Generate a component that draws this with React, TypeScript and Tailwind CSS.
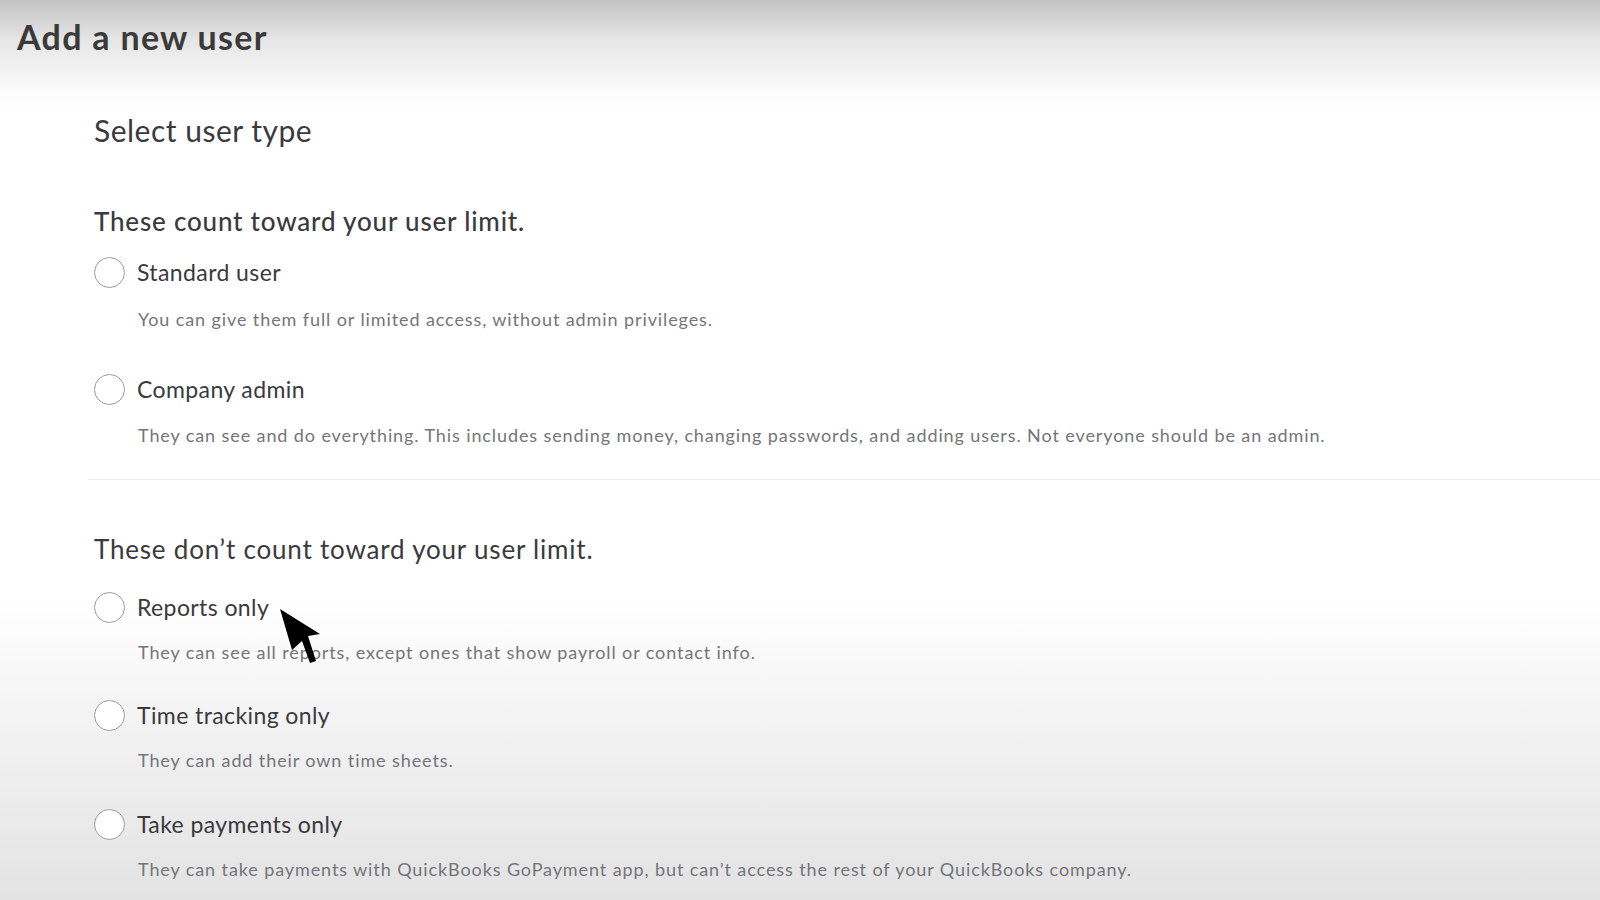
import React from 'react';

type Option = {
    label: string;
    description: string;
};

const counted: Option[] = [
    { label: 'Standard user', description: 'You can give them full or limited access, without admin privileges.' },
    {
        label: 'Company admin',
        description:
            'They can see and do everything. This includes sending money, changing passwords, and adding users. Not everyone should be an admin.',
    },
];

const notCounted: Option[] = [
    { label: 'Reports only', description: 'They can see all reports, except ones that show payroll or contact info.' },
    { label: 'Time tracking only', description: 'They can add their own time sheets.' },
    {
        label: 'Take payments only',
        description: "They can take payments with QuickBooks GoPayment app, but can\u2019t access the rest of your QuickBooks company.",
    },
];

const RadioRow: React.FC<{ option: Option; rowGap: string; descGap: string }> = ({ option, rowGap, descGap }) => (
    <div className={rowGap}>
        <label className="flex h-[30px] items-center gap-[12px] cursor-pointer">
            <span className="block h-[31px] w-[31px] shrink-0 rounded-full border-[1.5px] border-[#9a9ca0] bg-white" />
            <span className="text-[23px] leading-[30px] tracking-[0.4px] text-[#393a3d]">{option.label}</span>
        </label>
        <p className={`${descGap} pl-[44px] text-[18px] leading-[24px] tracking-[0.9px] text-[#74757a]`}>{option.description}</p>
    </div>
);

const Cursor: React.FC = () => (
    <svg className="pointer-events-none absolute left-[276px] top-[605px]" width="50" height="64" viewBox="0 0 50 64">
        <polygon points="4,4 16,45 26,36 34,58 40,56 32,31 44,29" fill="#000" />
    </svg>
);

export default function App() {
    return (
        <div className="relative h-[900px] w-full overflow-hidden bg-[linear-gradient(to_bottom,#c3c3c3_0px,#e6e6e6_40px,#fbfbfb_90px,#ffffff_110px,#ffffff_600px,#f3f3f3_720px,#e3e3e3_900px)] font-['Lato','Noto_Sans',sans-serif]">
            <h1 className="pl-[17px] pt-[17px] text-[34px] font-bold leading-[40px] tracking-[1.3px] text-[#3a3a3a]">Add a new user</h1>

            <div className="pl-[94px]">
                <h2 className="mt-[55px] text-[30px] leading-[36px] tracking-[0.5px] text-[#393a3d]">Select user type</h2>

                <h3 className="mt-[57px] text-[26px] font-medium leading-[32px] tracking-[0.8px] text-[#393a3d]">These count toward your user limit.</h3>
                <RadioRow option={counted[0]} rowGap="mt-[20px]" descGap="mt-[20px]" />
                <RadioRow option={counted[1]} rowGap="mt-[43px]" descGap="mt-[19px]" />
            </div>

            <div className="ml-[88px] mt-[32px] h-px bg-[#ebebeb]" />

            <div className="pl-[94px]">
                <h3 className="mt-[53px] text-[26px] leading-[32px] tracking-[0.8px] text-[#393a3d]">These don&rsquo;t count toward your user limit.</h3>
                <RadioRow option={notCounted[0]} rowGap="mt-[27px]" descGap="mt-[18px]" />
                <RadioRow option={notCounted[1]} rowGap="mt-[36px]" descGap="mt-[18px]" />
                <RadioRow option={notCounted[2]} rowGap="mt-[37px]" descGap="mt-[18px]" />
            </div>

            <Cursor />
        </div>
    );
}
